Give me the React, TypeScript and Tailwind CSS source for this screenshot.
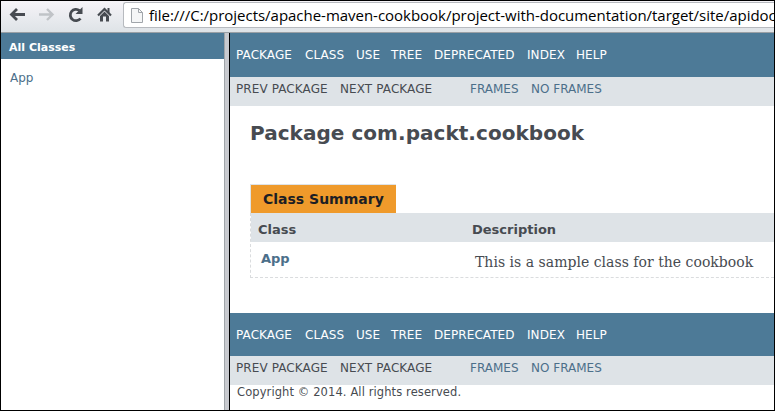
const navItems = [
  { label: 'PACKAGE', width: 'w-[69px]' },
  { label: 'CLASS', width: 'w-[51px]' },
  { label: 'USE', width: 'w-[35px]' },
  { label: 'TREE', width: 'w-[43px]' },
  { label: 'DEPRECATED', width: 'w-[93px]' },
  { label: 'INDEX', width: 'w-[49px]' },
  { label: 'HELP', width: 'w-[40px]' },
];

function NavBar({ className }: { className: string }) {
  return (
    <nav className={`flex shrink-0 items-center bg-[#4d7a97] pl-[6px] text-[12px] tracking-[0.08px] text-white ${className}`}>
      {navItems.map((item) => (
        <a key={item.label} className={`shrink-0 whitespace-nowrap ${item.width}`}>
          {item.label}
        </a>
      ))}
    </nav>
  );
}

function SubNav() {
  return (
    <div className="flex h-[29px] shrink-0 bg-[#dee3e7] pl-[6px] text-[12px] leading-[24px] whitespace-nowrap text-[#474b51]">
      <span className="w-[104px] tracking-[0.1px]">PREV PACKAGE</span>
      <span className="w-[130px] tracking-[0.1px]">NEXT PACKAGE</span>
      <a className="w-[61px] text-[#4c6f8a]">FRAMES</a>
      <a className="text-[#4c6f8a]">NO FRAMES</a>
    </div>
  );
}

function Toolbar() {
  return (
    <header className="flex h-8 shrink-0 border-b border-[#9aa0a5] bg-linear-to-b from-[#f6f4f8] to-[#dee3e7]">
      <svg className="h-[31px] w-[122px] shrink-0" viewBox="1 1 122 31" fill="none">
        <path d="M25 14.5H11.5M17 9l-5.5 5.5L17 20" stroke="#474b51" strokeWidth="2.8" />
        <path d="M39 14.5h13M47 9l5.5 5.5L47 20" stroke="#c0c3c7" strokeWidth="2.4" />
        <path d="M80.500 18.500A5.700 5.700 0 1 1 79.500 10.500" stroke="#474b51" strokeWidth="2.8" />
        <path d="M82.500 7v7h-7z" fill="#474b51" />
        <path d="M98 15.500 104.500 9 111 15.500" stroke="#474b51" strokeWidth="2.2" />
        <path d="M104.500 11.500 109 16V21.500H106V16.500H103V21.500H100V16Z" fill="#474b51" />
        <path d="M107.500 8h2v5h-2z" fill="#474b51" />
      </svg>
      <div className="mt-px flex h-[26px] min-w-0 flex-1 overflow-hidden rounded-l-[3px] border border-r-0 border-[#b7babf] bg-white pl-[7px]">
        <svg className="mt-[4px] h-4 w-3 shrink-0" viewBox="0 0 12 16" fill="none" stroke="#a0a5aa">
          <path d="M.5 1.500H7.500L11.500 5.500V15.500H.5Z" fill="#f5f6f7" />
          <path d="M7.500 1.500V5.500H11.500" />
        </svg>
        <span className="ml-[6px] font-['Open_Sans','Noto_Sans',sans-serif] text-[15px] leading-[25px] tracking-[-0.025px] whitespace-nowrap text-black">
          file:///C:/projects/apache-maven-cookbook/project-with-documentation/target/site/apidoc
        </span>
      </div>
    </header>
  );
}

export default function App() {
  return (
    <div className="flex h-[411px] w-[775px] flex-col overflow-hidden border border-black bg-white font-['DejaVu_Sans',sans-serif]">
      <Toolbar />
      <div className="flex min-h-0 flex-1">
        <aside className="w-[223px] shrink-0">
          <h1 className="h-[26px] bg-[#4d7a97] pl-[8px] text-[11px] leading-[30px] font-bold text-white">All Classes</h1>
          <a className="block pt-[11px] pl-[9px] text-[12px] leading-4 text-[#4c6f8a]">App</a>
        </aside>
        <div className="w-[6px] shrink-0 border-r border-l border-r-black border-l-[#9fa4a8] bg-[#c8cacf]" />
        <main className="flex min-w-0 flex-1 flex-col">
          <NavBar className="h-[44px]" />
          <SubNav />
          <h2 className="mt-[14px] pl-[20px] text-[20px] leading-[26px] font-bold tracking-[0.04px] whitespace-nowrap text-[#474b51]">
            Package com.packt.cookbook
          </h2>
          <section className="mt-[38px] ml-[20px]">
            <h3 className="h-[29px] w-[146px] border-t border-l border-[#dee3e7] bg-[#ef9a2b] pl-[12px] text-[14px] leading-[28px] font-bold whitespace-nowrap text-[#1c1e24]">
              Class Summary
            </h3>
            <div className="border-b border-l border-dashed border-[#dadcde]">
              <div className="flex h-[29px] bg-[#dee3e7] pl-[7px] text-[13px] leading-[33px] font-bold text-[#474b51]">
                <span className="w-[214px]">Class</span>
                <span>Description</span>
              </div>
              <div className="flex h-[35px] pl-[10px] whitespace-nowrap">
                <a className="w-[214px] text-[13px] leading-[33px] font-bold text-[#4c6f8a]">App</a>
                <span className="font-['DejaVu_Serif',serif] text-[14px] leading-[41px] tracking-[0.02px] text-[#474b51]">
                  This is a sample class for the cookbook
                </span>
              </div>
            </div>
          </section>
          <NavBar className="mt-[35px] h-[43px]" />
          <SubNav />
          <p className="pl-[7px] text-[11.5px] leading-[14px] tracking-[0.1px] text-[#474b51]">Copyright © 2014. All rights reserved.</p>
        </main>
      </div>
    </div>
  );
}
